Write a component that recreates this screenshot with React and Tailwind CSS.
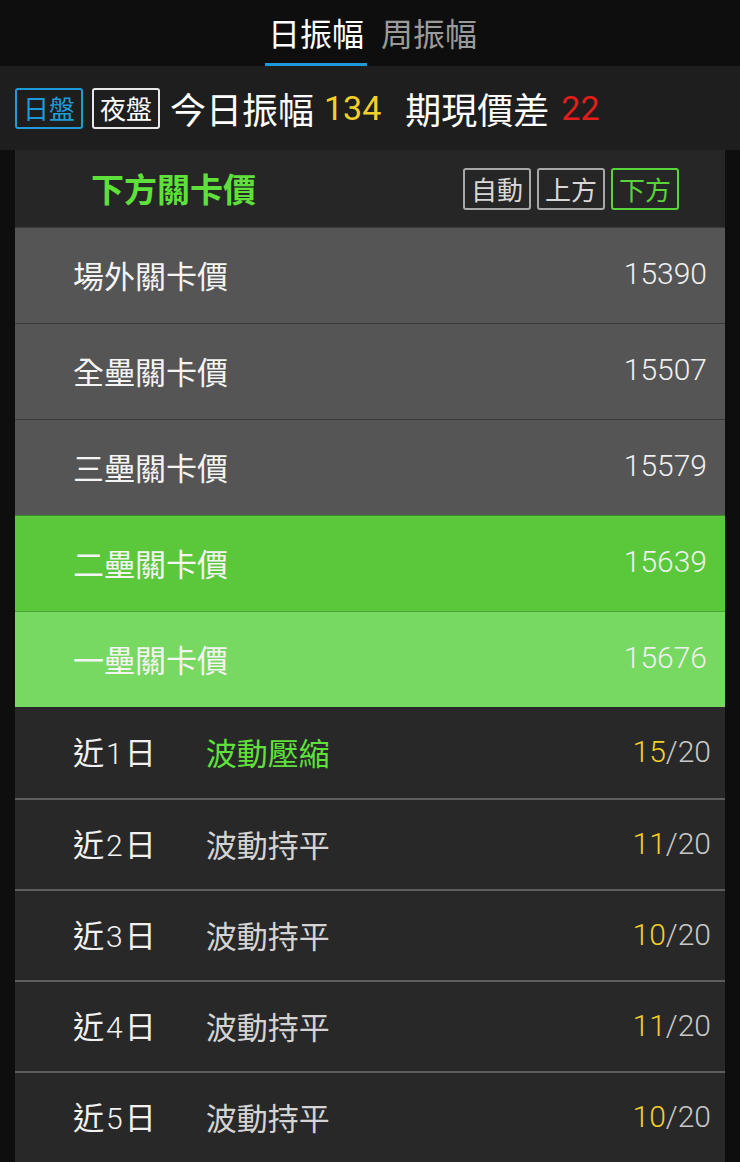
import React from "react";

const CJK = { fontFamily: '"Noto Sans CJK TC", "Noto Sans CJK SC", sans-serif' };
const NUM = { fontFamily: 'Roboto, "Noto Sans CJK TC", sans-serif' };

const levels = [
  { name: "場外關卡價", value: "15390", bg: "bg-[#555555]", border: "border-[#3a3a3a]" },
  { name: "全壘關卡價", value: "15507", bg: "bg-[#555555]", border: "border-[#3a3a3a]" },
  { name: "三壘關卡價", value: "15579", bg: "bg-[#555555]", border: "border-[#3a3a3a]" },
  { name: "二壘關卡價", value: "15639", bg: "bg-[#5ac83a]", border: "border-[#3b8f28]" },
  { name: "一壘關卡價", value: "15676", bg: "bg-[#77d862]", border: "border-[#4aa33a]" },
];

const days = [
  { d: "1", status: "波動壓縮", green: true, n: "15" },
  { d: "2", status: "波動持平", green: false, n: "11" },
  { d: "3", status: "波動持平", green: false, n: "10" },
  { d: "4", status: "波動持平", green: false, n: "11" },
  { d: "5", status: "波動持平", green: false, n: "10" },
];

export default function App() {
  return (
    <div className="w-[740px] min-h-[1162px] bg-[#0e0e0e] text-white overflow-hidden" style={CJK}>
      {/* Tabs */}
      <div className="h-[66px] flex justify-center items-end gap-[14px] pl-[2px]">
        <div className="relative h-full flex flex-col items-center justify-center px-[3px]">
          <span className="text-[32px] leading-none text-white mb-[2px]">日振幅</span>
          <div className="absolute bottom-0 left-0 right-0 h-[3px] bg-[#1e9bd6]" />
        </div>
        <div className="h-full flex items-center">
          <span className="text-[32px] leading-none text-[#9a9a9a] mb-[2px]">周振幅</span>
        </div>
      </div>

      {/* Info bar */}
      <div className="h-[84px] bg-[#1e1e1e] flex items-center pl-[15px]">
        <div className="w-[68px] h-[41px] border-2 border-[#1e9bd6] rounded-[3px] flex items-center justify-center text-[26px] leading-none text-[#1e9bd6]">
          日盤
        </div>
        <div className="ml-[9px] w-[68px] h-[41px] border-2 border-[#e8e8e8] rounded-[3px] flex items-center justify-center text-[26px] leading-none text-white">
          夜盤
        </div>
        <span className="ml-[10px] text-[36px] leading-none text-white">今日振幅</span>
        <span className="ml-[10px] text-[34px] leading-none text-[#f3cf2a]" style={NUM}>134</span>
        <span className="ml-[24px] text-[36px] leading-none text-white">期現價差</span>
        <span className="ml-[12px] text-[34px] leading-none text-[#e31d1a]" style={NUM}>22</span>
      </div>

      {/* Card */}
      <div className="ml-[15px] w-[710px]">
        <div className="h-[77px] bg-[#262626] flex items-center justify-between pl-[76px] pr-[46px]">
          <span className="text-[33px] font-bold leading-none text-[#5fe03a]">下方關卡價</span>
          <div className="flex gap-[6px]">
            <div className="w-[68px] h-[42px] border-2 border-[#a8a8a8] rounded-[3px] flex items-center justify-center text-[26px] leading-none text-[#d8d8d8]">
              自動
            </div>
            <div className="w-[68px] h-[42px] border-2 border-[#a8a8a8] rounded-[3px] flex items-center justify-center text-[26px] leading-none text-[#d8d8d8]">
              上方
            </div>
            <div className="w-[68px] h-[42px] border-2 border-[#5ad43a] rounded-[3px] flex items-center justify-center text-[26px] leading-none text-[#5ad43a]">
              下方
            </div>
          </div>
        </div>

        {levels.map((l) => (
          <div
            key={l.name}
            className={`h-[96px] ${l.bg} border-t ${l.border} flex items-center justify-between pl-[58px] pr-[18px]`}
          >
            <span className="text-[31px] leading-none text-[#f4f4f4] -mt-[3px]">{l.name}</span>
            <span className="text-[30px] leading-none font-light text-[#f0f0f0] -mt-[3px]" style={NUM}>{l.value}</span>
          </div>
        ))}

        {days.map((r, i) => (
          <div
            key={r.d}
            className={`h-[91px] bg-[#282828] flex items-center justify-between pl-[58px] pr-[14px] ${i > 0 ? "border-t-2 border-[#5e5e5e]" : ""}`}
          >
            <div className="flex items-center -mt-[2px]">
              <span className="text-[31px] leading-none text-[#f2f2f2]">
                近<span className="text-[30px] font-light mx-[2px]" style={NUM}>{r.d}</span>日
              </span>
              <span
                className={`ml-[50px] text-[31px] leading-none ${r.green ? "text-[#5fe03a]" : "text-[#d4d4d4]"}`}
              >
                {r.status}
              </span>
            </div>
            <span className="text-[30px] leading-none font-light -mt-[2px]" style={NUM}>
              <span className="text-[#f3cf2a]">{r.n}</span>
              <span className="text-[#c8c8c8]">/20</span>
            </span>
          </div>
        ))}
      </div>
    </div>
  );
}
